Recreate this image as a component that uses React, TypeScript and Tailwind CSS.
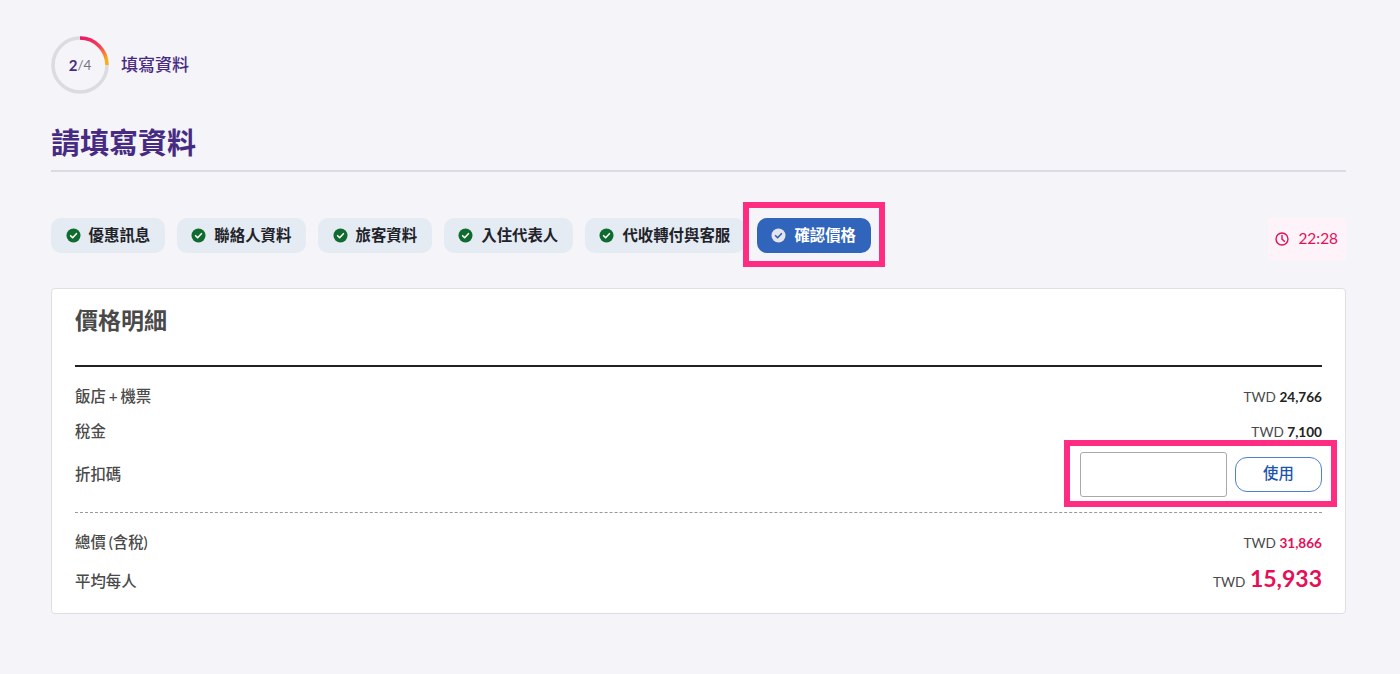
const FONT = "font-['Lato','Noto_Sans_CJK_TC',sans-serif]";

const CheckBadge = ({ active }: { active?: boolean }) => (
  <svg width="15" height="15" viewBox="0 0 15 15" className="shrink-0">
    <circle cx="7.5" cy="7.5" r="7" fill={active ? '#e4e4ea' : '#0f6b2e'} />
    <path
      d="M4.6 7.7l2 2 3.8-4"
      fill="none"
      stroke={active ? '#2f62b8' : '#ffffff'}
      strokeWidth="1.6"
      strokeLinecap="round"
      strokeLinejoin="round"
    />
  </svg>
);

const ProgressRing = () => (
  <svg width="58" height="58" viewBox="0 0 58 58" className="shrink-0">
    <defs>
      <linearGradient id="ring" x1="0" y1="0" x2="0.7" y2="1">
        <stop offset="0" stopColor="#ee1566" />
        <stop offset="0.55" stopColor="#f6405a" />
        <stop offset="1" stopColor="#fbae17" />
      </linearGradient>
    </defs>
    <circle cx="29" cy="29" r="27" fill="none" stroke="#dcdcde" strokeWidth="3.5" />
    <path d="M29 2a27 27 0 0 1 27 27" fill="none" stroke="url(#ring)" strokeWidth="3.5" />
  </svg>
);

const sections = ['優惠訊息', '聯絡人資料', '旅客資料', '入住代表人', '代收轉付與客服'];

const Chip = ({ label }: { label: string }) => (
  <div className="flex h-[35px] items-center gap-[8px] rounded-[10px] bg-[#e4ebf3] px-[14.6px] text-[15.4px] font-semibold text-[#1f2329]">
    <CheckBadge />
    <span>{label}</span>
  </div>
);

const Row = ({ label, className, children }: { label: string; className: string; children: React.ReactNode }) => (
  <div className={`flex items-center justify-between ${className}`}>
    <span className="text-[15.4px] font-medium text-[#4a4a4a] [word-spacing:-1px]">{label}</span>
    {children}
  </div>
);

const Amount = ({ value, pink }: { value: string; pink?: boolean }) => (
  <span className="text-[13.6px] text-[#4a4a4a]">
    TWD <span className={`font-bold ${pink ? 'text-[#e50f57]' : 'text-[#222222]'}`}>{value}</span>
  </span>
);

export default function App() {
  return (
    <div className={`${FONT} min-h-[674px] bg-[#f5f4f9] pl-[51px] pr-[54px] pt-[36px]`}>
      <div className="flex items-center gap-[12px]">
        <div className="relative">
          <ProgressRing />
          <div className="absolute inset-0 flex items-center justify-center text-[13.5px] text-[#77747f]">
            <b className="text-[15px] text-[#472b83]">2</b>/4
          </div>
        </div>
        <span className="text-[17px] font-medium text-[#472b83]">填寫資料</span>
      </div>

      <h1 className="mt-[23px] h-[55px] border-b-2 border-[#dcdae3] text-[29px] font-bold leading-[52px] text-[#472b83]">
        請填寫資料
      </h1>

      <div className="mt-[46px] flex items-start justify-between">
        <div className="flex items-center gap-[12px]">
          {sections.map((s) => (
            <Chip key={s} label={s} />
          ))}
          <div className="relative">
            <div className="flex h-[35px] items-center gap-[8px] rounded-[10px] bg-[#3165bb] px-[14.6px] text-[15.4px] font-semibold text-white">
              <CheckBadge active />
              <span>確認價格</span>
            </div>
            <div className="pointer-events-none absolute -inset-x-[14px] -bottom-[14px] -top-[16px] border-[6px] border-[#ff2d82]" />
          </div>
        </div>
        <div className="flex h-[42px] w-[78px] items-center justify-end gap-[9px] bg-[#fdf3f9] pr-[8px] text-[15.4px] text-[#e50f57]">
          <svg width="14" height="14" viewBox="0 0 15 15" fill="none" stroke="currentColor" strokeWidth="1.5" strokeLinecap="round">
            <circle cx="7.5" cy="7.5" r="6.4" />
            <path d="M7.5 3.8v3.8l2.6 2.4" />
          </svg>
          22:28
        </div>
      </div>

      <div className="mt-[28px] h-[326px] rounded-[4px] border border-[#dfdfe3] bg-white px-[23px]">
        <h2 className="h-[78px] border-b-2 border-[#222222] pt-[13px] text-[23px] font-semibold leading-[36px] text-[#4a4a4a]">
          價格明細
        </h2>
        <Row label="飯店 + 機票" className="mt-[18px] h-[24px]">
          <Amount value="24,766" />
        </Row>
        <Row label="稅金" className="mt-[11px] h-[24px]">
          <Amount value="7,100" />
        </Row>
        <Row label="折扣碼" className="mt-[9px] h-[44px]">
          <div className="relative mb-[2px] flex items-center gap-[8px]">
            <input className="h-[45px] w-[147px] rounded-[3px] border border-[#a9a9a9] bg-white" />
            <button className="h-[35px] w-[87px] rounded-[12px] border border-[#4f80cc] bg-white text-[15.4px] font-medium text-[#1d55ad]">
              使用
            </button>
            <div className="pointer-events-none absolute -bottom-[10px] -left-[16px] -right-[15px] -top-[12px] border-[6px] border-[#ff2d82]" />
          </div>
        </Row>
        <div className="mt-[15px] border-t border-dashed border-[#999999]" />
        <Row label="總價 (含稅)" className="mt-[18px] h-[24px]">
          <Amount value="31,866" pink />
        </Row>
        <Row label="平均每人" className="mt-[15px] h-[24px]">
          <span className="mb-[8px] text-[13.6px] text-[#4a4a4a]">
            TWD <span className="ml-[1px] text-[23px] font-bold text-[#e50f57]">15,933</span>
          </span>
        </Row>
      </div>
    </div>
  );
}
